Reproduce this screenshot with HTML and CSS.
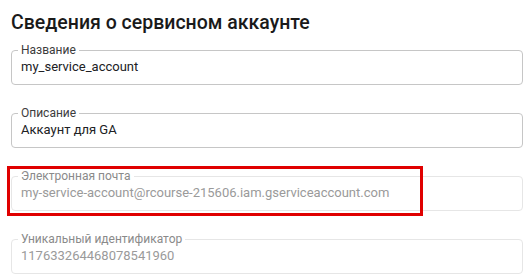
FILE: index.html
```html
<!DOCTYPE html>
<html lang="ru">
<head>
    <meta charset="UTF-8">
    <meta name="viewport" content="width=device-width, initial-scale=1.0">
    <title>Сведения о сервисном аккаунте</title>
    <link rel="stylesheet" href="styles.css">
</head>
<body>
    <h1>Сведения о сервисном аккаунте</h1>
    <div class="field-wrap">
        <fieldset class="field">
            <legend>Название</legend>
            <div class="field-value">my_service_account</div>
        </fieldset>
    </div>
    <div class="field-wrap">
        <fieldset class="field">
            <legend>Описание</legend>
            <div class="field-value">Аккаунт для GA</div>
        </fieldset>
    </div>
    <div class="field-wrap">
        <fieldset class="field disabled">
            <legend>Электронная почта</legend>
            <div class="field-value">my-service-account@rcourse-215606.iam.gserviceaccount.com</div>
        </fieldset>
        <div class="highlight"></div>
    </div>
    <div class="field-wrap">
        <fieldset class="field disabled">
            <legend>Уникальный идентификатор</legend>
            <div class="field-value">117633264468078541960</div>
        </fieldset>
    </div>
</body>
</html>
```

FILE: styles.css
```css
body {
    margin: 0;
    padding: 11px 4px 0 11px;
    background-color: #fff;
    font-family: Roboto, "Noto Sans", sans-serif;
    color: #202124;
}
h1 {
    margin: 0 0 8px;
    font-size: 19.5px;
    font-weight: 500;
    line-height: 24px;
    color: #1a1a1a;
}
.field-wrap {
    position: relative;
    margin-bottom: 21px;
}
.field-wrap:last-child {
    margin-bottom: 0;
}
.field {
    margin: 0;
    padding: 2px 9px 9px;
    border: 1px solid #c6c6c6;
    border-radius: 4px;
    min-width: 0;
}
.field legend {
    margin-left: -3px;
    padding: 0 3px;
    font-size: 12px;
    line-height: 14px;
    color: #3c3c3c;
}
.field-value {
    font-size: 13px;
    line-height: 16px;
    color: #202124;
    white-space: nowrap;
}
.field.disabled {
    border-color: #e6e6e6;
}
.field.disabled legend {
    color: #8a8a8a;
}
.field.disabled .field-value {
    color: #9a9a9a;
}
.highlight {
    position: absolute;
    top: -3px;
    left: -4px;
    width: 410px;
    height: 44px;
    border: 3px solid #e00000;
}
```
